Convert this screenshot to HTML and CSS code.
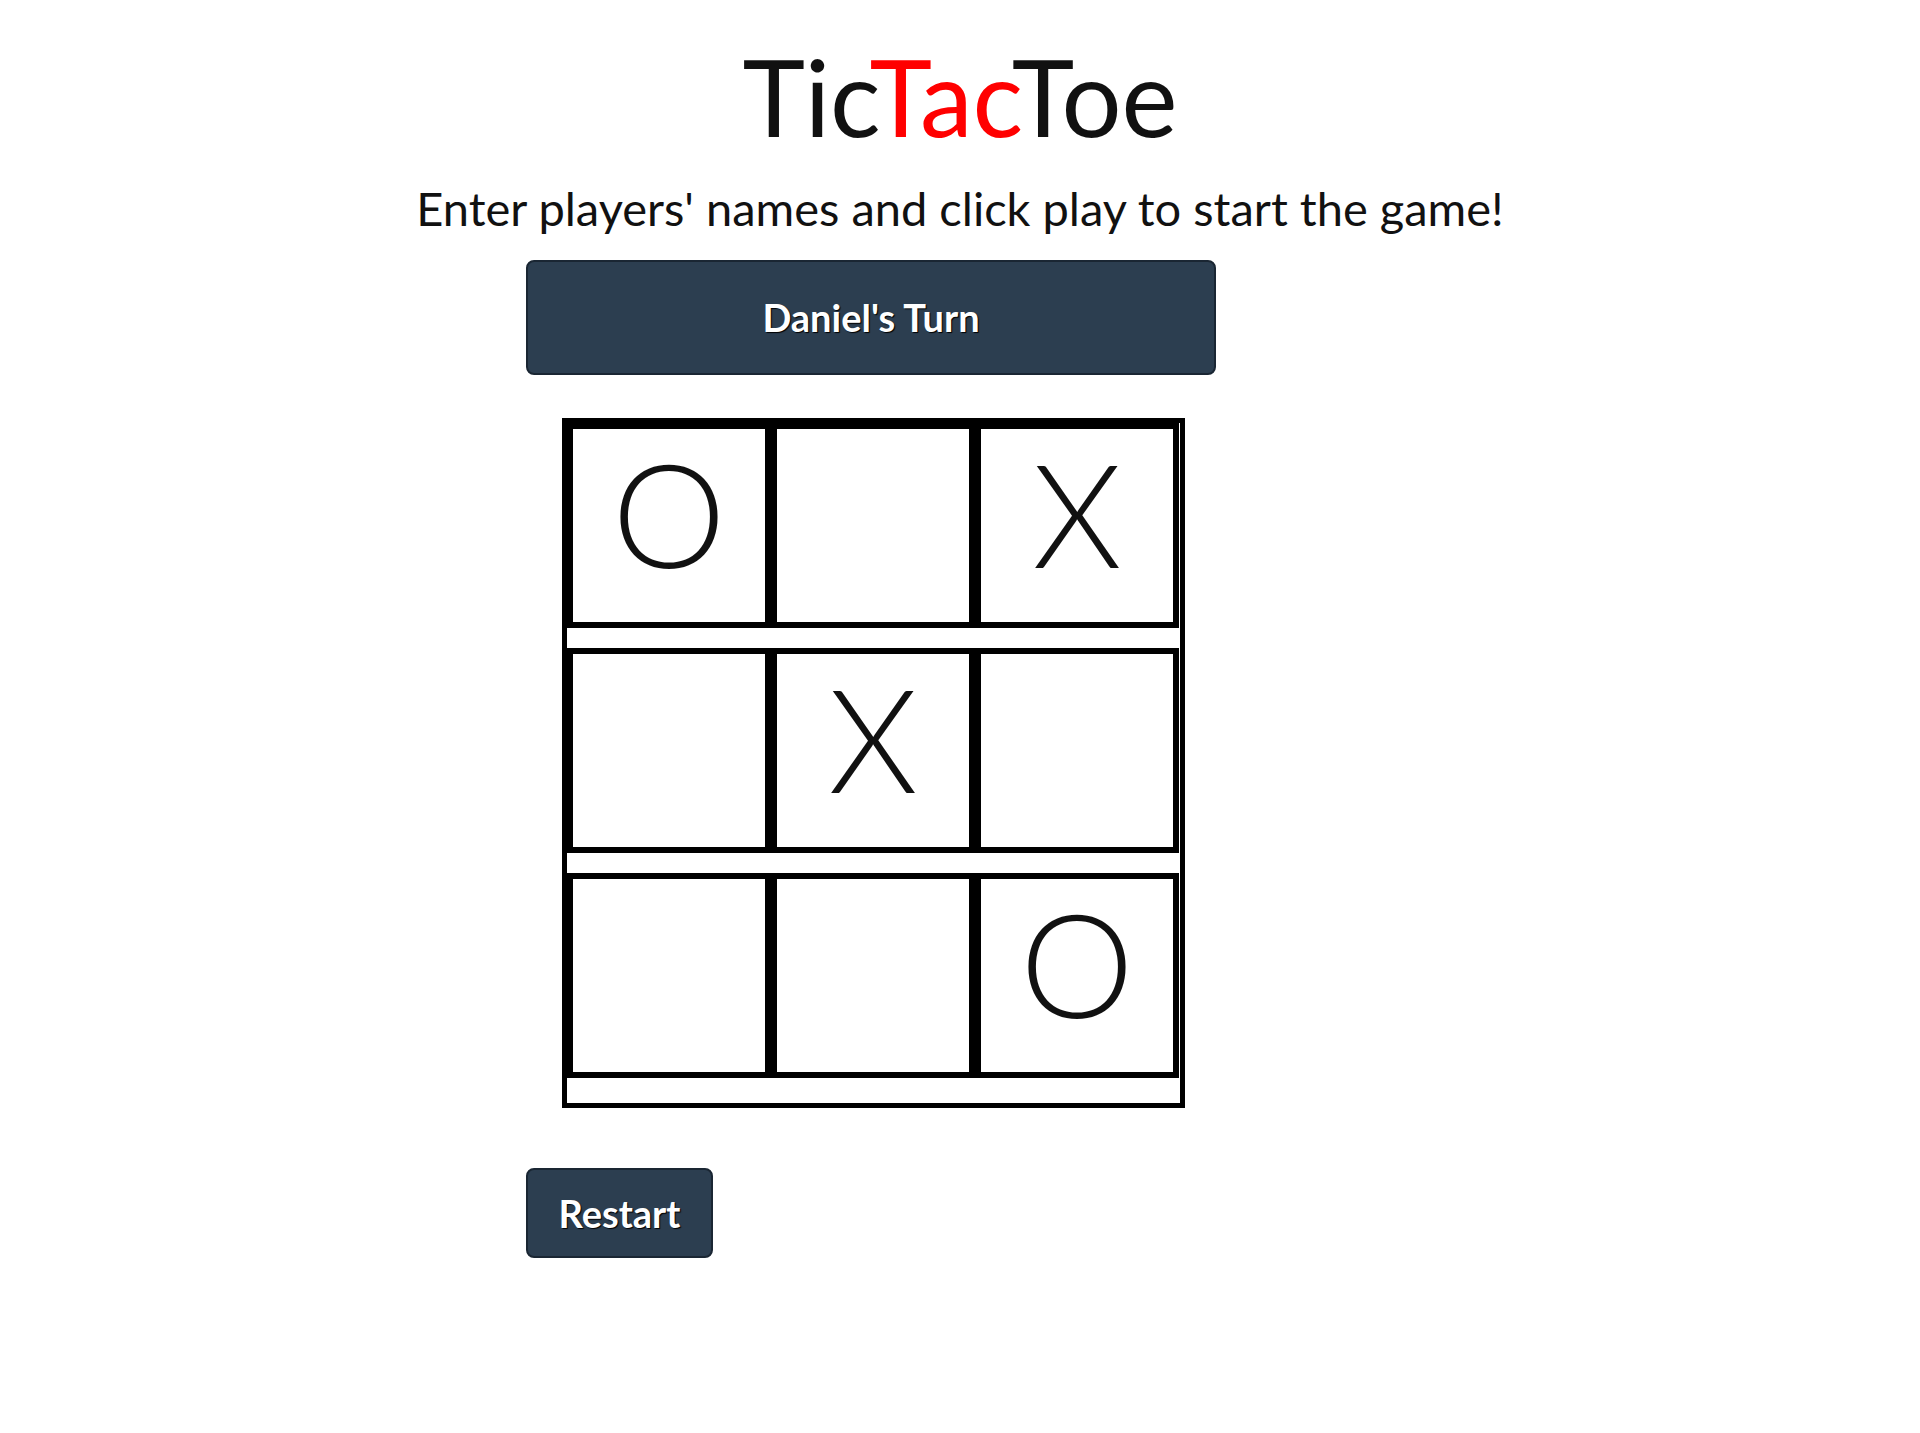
FILE: index.html
```html
<!DOCTYPE html>
<html lang="en">
  <head>
    <meta charset="UTF-8" />
    <meta name="viewport" content="width=device-width, initial-scale=1.0" />
    <title>TicTacToe</title>
    <link rel="stylesheet" href="styles.css">
  </head>
  <body>
    <h1 class="title">Tic<span class="accent">Tac</span>Toe</h1>
    <p class="intro">Enter players' names and click play to start the game!</p>

    <div class="game">
      <div class="turn">Daniel's Turn</div>

      <div class="board">
        <div class="row">
          <div class="cell">O</div>
          <div class="cell"></div>
          <div class="cell">X</div>
        </div>
        <div class="row">
          <div class="cell"></div>
          <div class="cell">X</div>
          <div class="cell"></div>
        </div>
        <div class="row">
          <div class="cell"></div>
          <div class="cell"></div>
          <div class="cell">O</div>
        </div>
      </div>

      <button class="restart">Restart</button>
    </div>
  </body>
</html>
```

FILE: styles.css
```css
body {
  margin: 0;
  background-color: #fff;
  color: #111;
  font-family: Lato, "Open Sans", sans-serif;
}

.title {
  margin: 33px 0 20px;
  font-size: 106px;
  font-weight: 400;
  line-height: 1.2;
  text-align: center;
}

.accent {
  color: #ff0000;
}

.intro {
  margin: 0 0 23px;
  font-size: 47px;
  line-height: 1.2;
  text-align: center;
}

.game {
  margin-left: 526px;
}

.turn {
  display: flex;
  align-items: center;
  justify-content: center;
  box-sizing: border-box;
  width: 690px;
  height: 115px;
  margin-bottom: 43px;
  background-color: #2c3e50;
  border: 2px solid #1a2633;
  border-radius: 8px;
  color: #fff;
  font-size: 38px;
  font-weight: 700;
  text-shadow: 1px 1px 1px #000;
}

.board {
  width: 613px;
  margin-left: 36px;
  margin-bottom: 60px;
  padding-bottom: 5px;
  border: 5px solid #000;
}

.row {
  display: flex;
  padding-bottom: 20px;
}

.cell {
  display: flex;
  align-items: center;
  justify-content: center;
  box-sizing: border-box;
  width: 204px;
  height: 205px;
  padding-bottom: 24px;
  border: 6px solid #000;
  font-size: 144px;
  font-weight: 300;
  line-height: 1;
}

.restart {
  box-sizing: border-box;
  width: 187px;
  height: 90px;
  padding: 0;
  background-color: #2c3e50;
  border: 2px solid #1a2633;
  border-radius: 8px;
  color: #fff;
  font-family: Lato, "Open Sans", sans-serif;
  font-size: 38px;
  font-weight: 700;
  text-shadow: 1px 1px 1px #000;
  cursor: pointer;
}
```
